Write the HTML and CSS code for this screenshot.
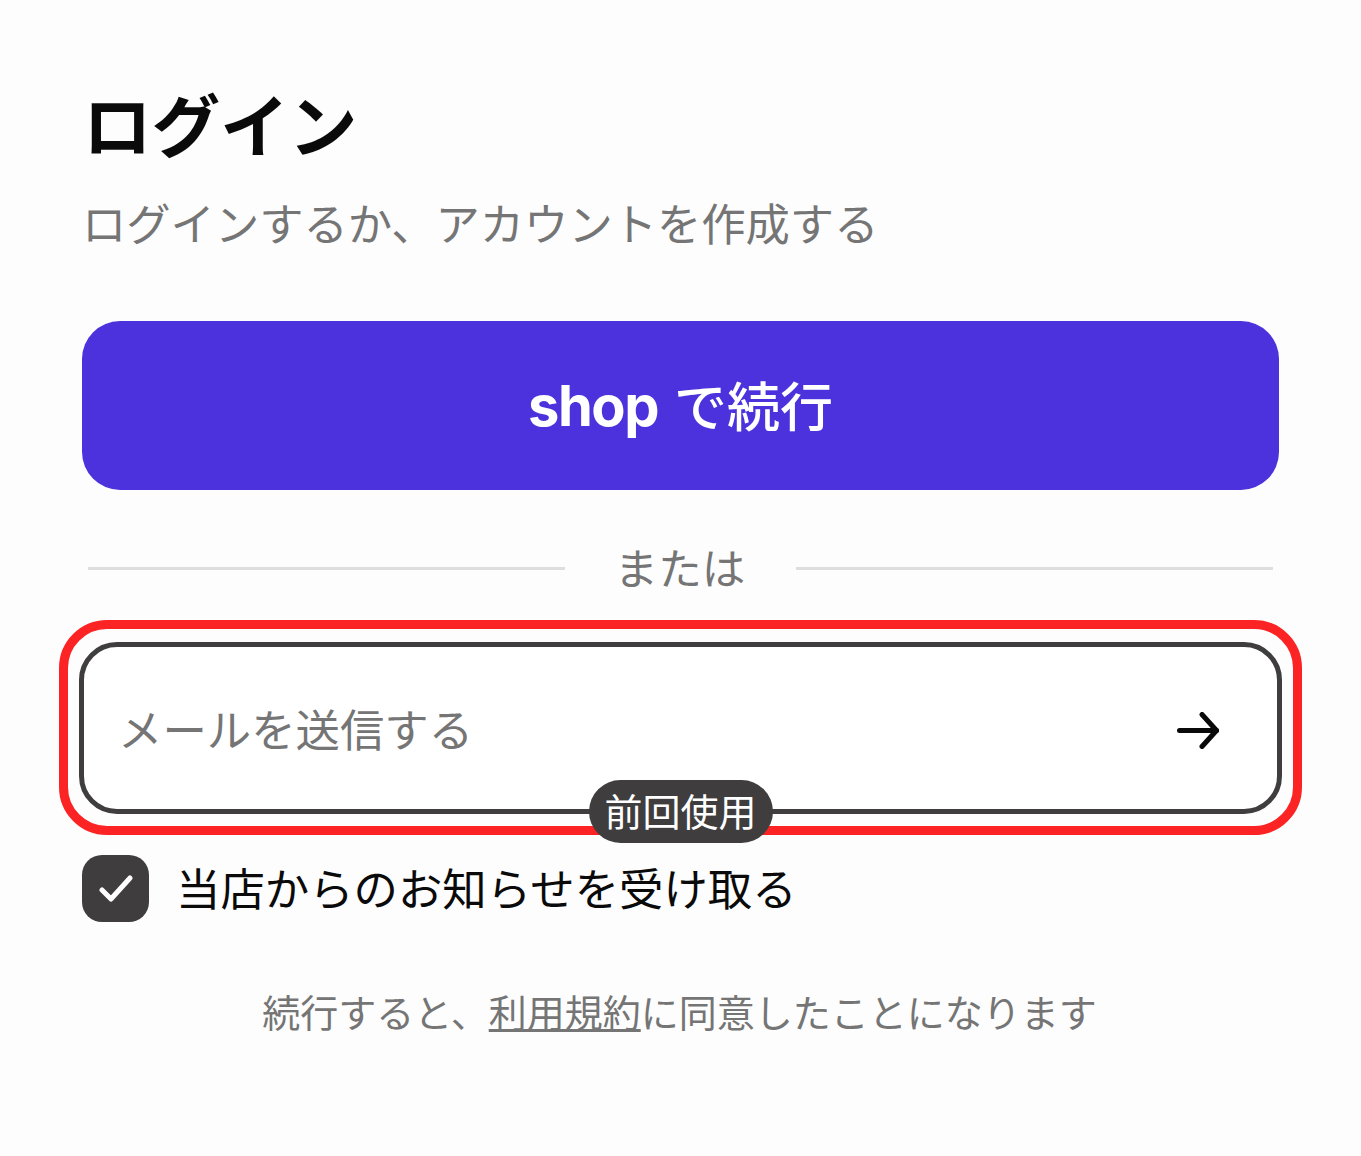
FILE: index.html
```html
<!DOCTYPE html>
<html lang="ja">
<head>
    <meta charset="UTF-8">
    <title>ログイン</title>
    <link rel="stylesheet" href="styles.css">
</head>
<body>
    <main class="login">
        <h1 class="title">ログイン</h1>
        <p class="subtitle">ログインするか、アカウントを作成する</p>

        <button class="shop-btn"><span class="shop-logo">shop</span><span class="shop-text">で続行</span></button>

        <div class="divider"><span>または</span></div>

        <!-- 赤枠は前回使用の強調 -->
        <div class="email-frame">
            <div class="email-box">
                <span class="placeholder">メールを送信する</span>
                <svg class="arrow" width="42" height="37" viewBox="0 0 42 37" fill="none" stroke="#0a0a0a" stroke-width="5" stroke-linecap="round" stroke-linejoin="round">
                    <path d="M2.5 18.5H39.5"/>
                    <path d="M25 2.5L39.5 18.5L25 34.5"/>
                </svg>
            </div>
            <span class="last-used">前回使用</span>
        </div>

        <label class="consent">
            <span class="checkbox">
                <svg width="34" height="28" viewBox="0 0 34 28" fill="none" stroke="#fff" stroke-width="5" stroke-linecap="round" stroke-linejoin="round">
                    <path d="M3 15L12 24L31 3"/>
                </svg>
            </span>
            <span class="consent-text">当店からのお知らせを受け取る</span>
        </label>

        <p class="terms">続行すると、<a href="#">利用規約</a>に同意したことになります</p>
    </main>
</body>
</html>
```

FILE: styles.css
```css
body {
    margin: 0;
    background-color: #fdfdfd;
    font-family: "Noto Sans CJK JP", "Noto Sans", sans-serif;
    color: #0a0a0a;
}

.login {
    display: flex;
    flex-direction: column;
    width: 1197px;
    height: 1156px;
    margin-left: 82px;
    box-sizing: border-box;
    padding-top: 77px;
}

.title {
    margin: 0 0 0 1px;
    font-size: 68.6px;
    line-height: 90px;
    font-weight: 700;
}

.subtitle {
    margin: 23px 0 0;
    font-size: 44.3px;
    line-height: 64px;
    color: #757575;
}

.shop-btn {
    display: flex;
    justify-content: center;
    align-items: center;
    gap: 16px;
    height: 169px;
    margin-top: 67px;
    padding: 0;
    border: none;
    border-radius: 38px;
    background-color: #4b32dc;
    color: #fff;
    font-family: inherit;
}

.shop-logo {
    font-family: Inter, sans-serif;
    font-size: 56px;
    font-weight: 700;
    letter-spacing: -1.5px;
    line-height: 60px;
}

.shop-text {
    margin-bottom: 4px;
    font-size: 53px;
    font-weight: 500;
    line-height: 60px;
}

.divider {
    display: flex;
    align-items: center;
    gap: 50px;
    height: 64px;
    margin: 46px 6px 0;
    font-size: 43.6px;
    color: #757575;
}

.divider span {
    margin: 0 1px 5px 0;
}

.divider::before,
.divider::after {
    content: "";
    flex: 1;
    height: 3px;
    background-color: #dedede;
}

.email-frame {
    position: relative;
    margin: 20px -23px 0;
    padding: 13px 11px 12px;
    border: 9px solid #fb2323;
    border-radius: 48px;
}

.email-box {
    display: flex;
    justify-content: space-between;
    align-items: center;
    height: 172px;
    box-sizing: border-box;
    padding: 0 58px 0 35px;
    border: 5px solid #3f3d3e;
    border-radius: 38px;
    background-color: #fff;
}

.placeholder {
    margin: 0 0 2px -1px;
    font-size: 44.4px;
    color: #757575;
}

.arrow {
    margin-top: 4px;
}

.last-used {
    position: absolute;
    left: 50%;
    bottom: -17px;
    transform: translateX(-50%);
    padding: 0 16px;
    height: 63px;
    border-radius: 32px;
    background-color: #3f3d3e;
    color: #fff;
    font-size: 38px;
    line-height: 60px;
    white-space: nowrap;
}

.consent {
    display: flex;
    align-items: center;
    gap: 27px;
    margin-top: 20px;
}

.checkbox {
    display: flex;
    justify-content: center;
    align-items: center;
    width: 67px;
    height: 67px;
    border-radius: 20px;
    background-color: #3f3d3e;
}

.consent-text {
    margin-bottom: 4px;
    font-size: 44.4px;
    line-height: 63px;
}

.terms {
    margin: 61px 2px 0 0;
    text-align: center;
    font-size: 38px;
    line-height: 56px;
    color: #757575;
}

.terms a {
    color: inherit;
    text-decoration: underline;
}
```
